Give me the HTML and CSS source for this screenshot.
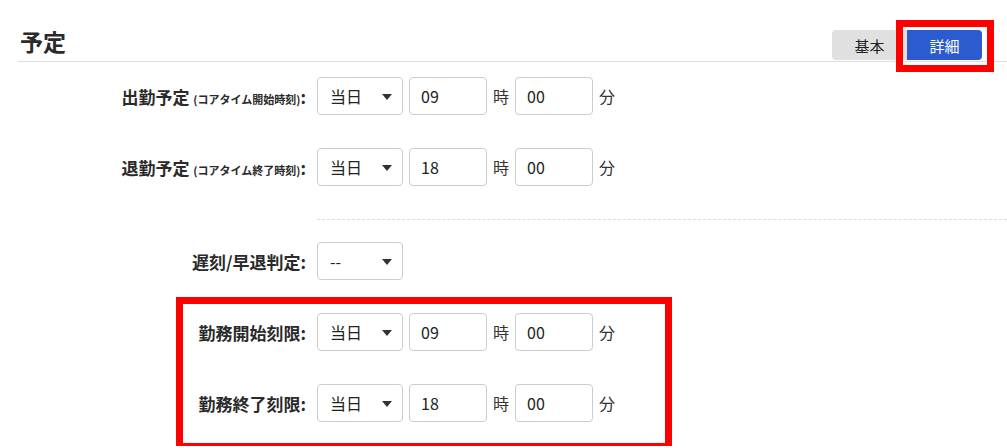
FILE: index.html
```html
<!DOCTYPE html>
<html lang="ja">
<head>
  <meta charset="UTF-8">
  <meta name="viewport" content="width=device-width, initial-scale=1.0">
  <title>予定</title>
  <link rel="stylesheet" href="styles.css">
</head>

<body>
  <div class="page">
    <!-- Section header -->
    <div class="section-head">
      <h2 class="section-title">予定</h2>
      <div class="mode-switch">
        <button class="mode-btn">基本</button>
        <button class="mode-btn is-active">詳細</button>
      </div>
    </div>

    <!-- Schedule form -->
    <div class="form">
      <div class="form-row">
        <label class="form-label">出勤予定 <small>(コアタイム開始時刻)</small>:</label>
        <div class="select-wrap"><select><option>当日</option><option>翌日</option></select></div>
        <input class="time-input" type="text" value="09">
        <span class="unit">時</span>
        <input class="time-input" type="text" value="00">
        <span class="unit">分</span>
      </div>

      <div class="form-row">
        <label class="form-label">退勤予定 <small>(コアタイム終了時刻)</small>:</label>
        <div class="select-wrap"><select><option>当日</option><option>翌日</option></select></div>
        <input class="time-input" type="text" value="18">
        <span class="unit">時</span>
        <input class="time-input" type="text" value="00">
        <span class="unit">分</span>
      </div>

      <hr class="divider">

      <div class="form-row">
        <label class="form-label">遅刻/早退判定:</label>
        <div class="select-wrap"><select><option>--</option></select></div>
      </div>

      <div class="highlight-group">
        <div class="form-row">
          <label class="form-label">勤務開始刻限:</label>
          <div class="select-wrap"><select><option>当日</option><option>翌日</option></select></div>
          <input class="time-input" type="text" value="09">
          <span class="unit">時</span>
          <input class="time-input" type="text" value="00">
          <span class="unit">分</span>
        </div>

        <div class="form-row">
          <label class="form-label">勤務終了刻限:</label>
          <div class="select-wrap"><select><option>当日</option><option>翌日</option></select></div>
          <input class="time-input" type="text" value="18">
          <span class="unit">時</span>
          <input class="time-input" type="text" value="00">
          <span class="unit">分</span>
        </div>
      </div>
    </div>
  </div>
</body>

</html>
```

FILE: styles.css
```css
* {
    box-sizing: border-box;
}
body {
    margin: 0;
    background-color: white;
    color: #333;
    font-family: "Noto Sans CJK JP", "Liberation Sans", sans-serif;
}
.page {
    padding-left: 18px;
    padding-bottom: 24px;
}
/* Header */
.section-head {
    display: flex;
    justify-content: space-between;
    padding: 30px 25px 1px 0;
    border-bottom: 1px solid #ddd;
}
.section-title {
    margin: 0 0 0 2px;
    font-size: 23px;
    line-height: 22px;
    font-weight: bold;
    color: #2a2a2a;
    align-self: flex-start;
}
.mode-switch {
    display: flex;
}
.mode-btn {
    position: relative;
    width: 75px;
    height: 30px;
    border: none;
    background: #e0e0e0;
    color: #222;
    font-family: inherit;
    font-size: 15px;
    padding: 0;
    border-radius: 4px 0 0 4px;
}
.mode-btn.is-active {
    background: #2b5bcf;
    color: white;
    border-radius: 0 4px 4px 0;
}
.mode-btn.is-active::after {
    content: "";
    position: absolute;
    left: -11px;
    right: -12px;
    top: -10px;
    bottom: -12px;
    border: 7px solid #ff0000;
}
/* Form rows */
.form {
    padding-top: 15px;
}
.form-row {
    display: flex;
    align-items: center;
    height: 38px;
    margin-bottom: 33px;
}
.form-label {
    width: 288px;
    margin-right: 11px;
    text-align: right;
    font-size: 17px;
    font-weight: bold;
    color: #2a2a2a;
    white-space: nowrap;
}
.form-label small {
    font-size: 11px;
}
.select-wrap {
    position: relative;
    width: 86px;
    height: 38px;
}
.select-wrap select {
    appearance: none;
    width: 100%;
    height: 100%;
    padding: 0 12px;
    border: 1px solid #ccc;
    border-radius: 4px;
    background: white;
    color: #222;
    font-family: inherit;
    font-size: 16px;
}
.select-wrap::after {
    content: "";
    position: absolute;
    right: 11px;
    top: 17px;
    border-left: 5px solid transparent;
    border-right: 5px solid transparent;
    border-top: 6px solid #333;
}
.time-input {
    width: 78px;
    height: 38px;
    margin-left: 6px;
    padding: 0 11px;
    border: 1px solid #ccc;
    border-radius: 4px;
    color: #222;
    font-family: inherit;
    font-size: 16px;
}
.unit {
    margin-left: 6px;
    font-size: 16px;
    color: #333;
}
.divider {
    margin: 3px 0 22px 299px;
    border: none;
    border-top: 1px dashed #ddd;
}
/* Highlighted rows */
.highlight-group {
    position: relative;
}
.highlight-group .form-row:last-child {
    margin-bottom: 0;
}
.highlight-group::after {
    content: "";
    position: absolute;
    left: 158px;
    width: 482px;
    top: -16px;
    height: 139px;
    border: 7px solid #ff0000;
    pointer-events: none;
}
```
